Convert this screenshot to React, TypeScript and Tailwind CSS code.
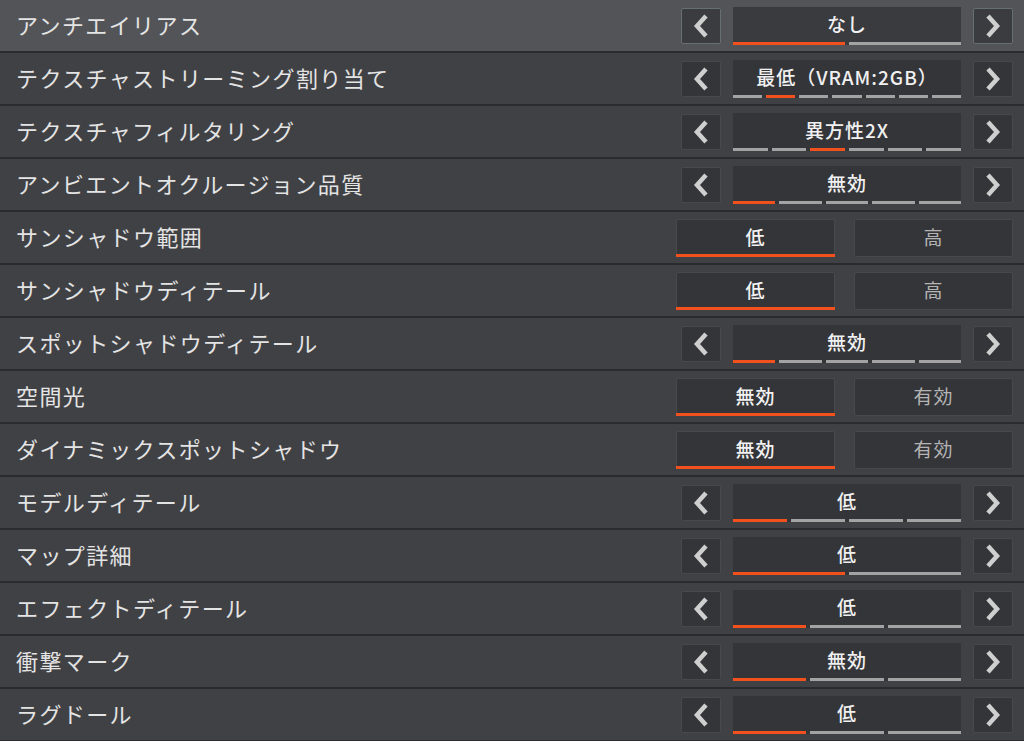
import React from 'react';

type Setting =
  | { label: string; kind: 'cycle'; value: string; steps: number; active: number }
  | { label: string; kind: 'toggle'; options: [string, string]; active: number };

const SETTINGS: Setting[] = [
  { label: 'アンチエイリアス', kind: 'cycle', value: 'なし', steps: 2, active: 0 },
  { label: 'テクスチャストリーミング割り当て', kind: 'cycle', value: '最低（VRAM:2GB）', steps: 7, active: 1 },
  { label: 'テクスチャフィルタリング', kind: 'cycle', value: '異方性2X', steps: 6, active: 2 },
  { label: 'アンビエントオクルージョン品質', kind: 'cycle', value: '無効', steps: 5, active: 0 },
  { label: 'サンシャドウ範囲', kind: 'toggle', options: ['低', '高'], active: 0 },
  { label: 'サンシャドウディテール', kind: 'toggle', options: ['低', '高'], active: 0 },
  { label: 'スポットシャドウディテール', kind: 'cycle', value: '無効', steps: 5, active: 0 },
  { label: '空間光', kind: 'toggle', options: ['無効', '有効'], active: 0 },
  { label: 'ダイナミックスポットシャドウ', kind: 'toggle', options: ['無効', '有効'], active: 0 },
  { label: 'モデルディテール', kind: 'cycle', value: '低', steps: 4, active: 0 },
  { label: 'マップ詳細', kind: 'cycle', value: '低', steps: 2, active: 0 },
  { label: 'エフェクトディテール', kind: 'cycle', value: '低', steps: 3, active: 0 },
  { label: '衝撃マーク', kind: 'cycle', value: '無効', steps: 3, active: 0 },
  { label: 'ラグドール', kind: 'cycle', value: '低', steps: 3, active: 0 },
];

function Chevron({ dir }: { dir: 'left' | 'right' }) {
  const points = dir === 'left' ? '13,2 4,12 13,22' : '3,2 12,12 3,22';
  return (
    <svg className="h-[24px] w-[16px]" viewBox="0 0 16 24" fill="none">
      <polyline points={points} stroke="#cfcfcf" strokeWidth={4.5} strokeLinejoin="miter" />
    </svg>
  );
}

function ArrowButton({ dir, focused }: { dir: 'left' | 'right'; focused: boolean }) {
  return (
    <button
      className={`flex h-[36px] w-[40px] items-center justify-center rounded-[2px] border ${
        focused ? 'border-[#66706e] bg-[#3b3c40]' : 'border-[#48494d] bg-[#343539]'
      }`}
      type="button"
    >
      <Chevron dir={dir} />
    </button>
  );
}

function CycleControl({ value, steps, active, focused }: { value: string; steps: number; active: number; focused: boolean }) {
  return (
    <div className="flex w-[332px] items-center gap-[12px]">
      <ArrowButton dir="left" focused={focused} />
      <div
        className={`flex h-[38px] flex-1 flex-col justify-between ${
          focused ? 'bg-[#3a3b3f]' : 'bg-[#343539]'
        }`}
      >
        <div className="flex flex-1 items-center justify-center pt-[1px] text-[19px] font-medium tracking-[1px] text-[#f0f0f0]">
          {value}
        </div>
        <div className="flex h-[3px] gap-[4px]">
          {Array.from({ length: steps }).map((_, i) => (
            <div
              key={i}
              className={`flex-1 ${i === active ? 'bg-[#f2501c]' : 'bg-[#a3a3a3]'}`}
            />
          ))}
        </div>
      </div>
      <ArrowButton dir="right" focused={focused} />
    </div>
  );
}

function ToggleControl({ options, active }: { options: [string, string]; active: number }) {
  return (
    <div className="flex w-[337px] gap-[19px]">
      {options.map((option, i) => (
        <button
          key={option}
          className={`relative flex h-[38px] flex-1 items-center justify-center rounded-[2px] border border-[#48494d] bg-[#343539] text-[19px] tracking-[1px] ${
            i === active ? 'font-medium text-[#f2f2f2]' : 'text-[#b4b4b4]'
          }`}
          type="button"
        >
          {option}
          {i === active ? (
            <span className="absolute -bottom-px -left-px -right-px h-[3px] bg-[#f2501c]" />
          ) : null}
        </button>
      ))}
    </div>
  );
}

export default function App() {
  return (
    <div
      className="h-[741px] w-[1024px] overflow-hidden bg-[#2a2b2e]"
      style={{ fontFamily: '"Noto Sans CJK JP", "Noto Sans", sans-serif' }}
    >
      {SETTINGS.map((setting, index) => {
        const focused = index === 0;
        return (
          <div
            key={setting.label}
            className={`flex h-[53px] items-center justify-between border-b-2 border-[#2a2b2e] pl-[16px] pr-[11px] ${
              focused ? 'bg-[#535458]' : 'bg-[#404145]'
            }`}
          >
            <span className="-mt-[2px] text-[22px] tracking-[1.4px] text-[#e4e4e4]">{setting.label}</span>
            {setting.kind === 'cycle' ? (
              <CycleControl
                value={setting.value}
                steps={setting.steps}
                active={setting.active}
                focused={focused}
              />
            ) : (
              <ToggleControl options={setting.options} active={setting.active} />
            )}
          </div>
        );
      })}
    </div>
  );
}
